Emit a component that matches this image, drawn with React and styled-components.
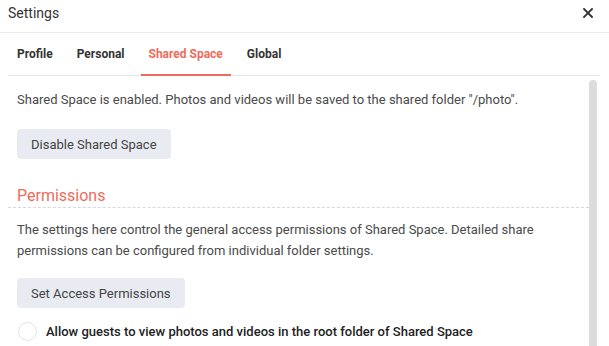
import styled, { createGlobalStyle } from "styled-components"

const GlobalStyle = createGlobalStyle`
    html, body {
        margin: 0;
        padding: 0;
        background: #fff;
        overflow: hidden;
    }
    body {
        font-family: Roboto, "Liberation Sans", sans-serif;
        color: #4a4a4a;
    }
`

const coral = "#ee6b5c"

const tabs = ["Profile", "Personal", "Shared Space", "Global"]

const App = () => {
    return(<>
    <GlobalStyle/>
    <Dialog>
        <Header>
            <Title>Settings</Title>
            <CloseButton aria-label="Close">
                <svg width="10" height="10" viewBox="0 0 10 10">
                    <path d="M1 1L9 9M9 1L1 9" stroke="#333" strokeWidth="1.9" strokeLinecap="square"/>
                </svg>
            </CloseButton>
        </Header>
        <Tabs>
            {tabs.map(t => <Tab key={t} active={t === "Shared Space"}>{t}</Tab>)}
        </Tabs>
        <Body>
            <Content>
                <Text>Shared Space is enabled. Photos and videos will be saved to the shared folder "/photo".</Text>
                <Button>Disable Shared Space</Button>
                <SectionTitle>Permissions</SectionTitle>
                <Paragraph>
                    The settings here control the general access permissions of Shared Space. Detailed share permissions can be configured from individual folder settings.
                </Paragraph>
                <Button top="17px">Set Access Permissions</Button>
                <OptionRow>
                    <Radio/>
                    <OptionLabel>Allow guests to view photos and videos in the root folder of Shared Space</OptionLabel>
                </OptionRow>
            </Content>
            <ScrollTrack>
                <ScrollThumb/>
            </ScrollTrack>
        </Body>
    </Dialog>
    </>)
}

const Dialog = styled.div`
    width: 609px;
    height: 346px;
    display: flex;
    flex-direction: column;
    overflow: hidden;
`

const Header = styled.div`
    height: 33px;
    flex-shrink: 0;
    display: flex;
    align-items: center;
    justify-content: space-between;
    padding: 0 16px 0 8px;
    border-bottom: 1px solid #e8eaec;
    box-sizing: border-box;
`

const Title = styled.div`
    font-size: 14px;
    color: #333;
    margin-top: -6px;
`

const CloseButton = styled.div`
    display: flex;
    align-items: center;
    margin-top: -6px;
`

const Tabs = styled.div`
    display: flex;
    gap: 8px;
    margin: 0 9px 0 8px;
    padding-left: 1px;
    height: 43px;
    flex-shrink: 0;
    border-bottom: 1px solid #e6e6e6;
    box-sizing: border-box;
`

const Tab = styled.div`
    display: flex;
    align-items: center;
    padding: 0 8px;
    font-size: 12px;
    font-weight: 700;
    color: ${p => p.active ? coral : "#333"};
    border-bottom: 2px solid ${p => p.active ? coral : "transparent"};
    margin-bottom: -1px;
    padding-top: 1px;
`

const Body = styled.div`
    flex: 1;
    display: flex;
    min-height: 0;
    margin: 0 12px 0 8px;
`

const Content = styled.div`
    flex: 1;
    padding: 14px 0 0 9px;
    font-size: 13px;
`

const Text = styled.div`
    line-height: 20px;
    color: #4a4a4a;
`

const Button = styled.div`
    display: inline-flex;
    align-items: center;
    height: 30px;
    padding: 0 14px;
    margin-top: ${p => p.top || "19px"};
    background: #e8ecf2;
    border-radius: 4px;
    color: #444;
    font-size: 13px;
`

const SectionTitle = styled.div`
    margin-top: 27px;
    font-size: 16px;
    line-height: 20px;
    color: ${coral};
    padding-bottom: 1px;
    margin-left: -9px;
    padding-left: 9px;
    border-bottom: 1px dashed #d6d9dd;
`

const Paragraph = styled.div`
    margin-top: 11px;
    line-height: 21px;
    color: #4a4a4a;
    padding-right: 40px;
`

const OptionRow = styled.div`
    display: flex;
    align-items: center;
    gap: 9px;
    margin-top: 14px;
    padding-left: 1px;
`

const Radio = styled.div`
    width: 17px;
    height: 17px;
    border: 1px solid #e2e4e7;
    border-radius: 50%;
    background: #fff;
    flex-shrink: 0;
`

const OptionLabel = styled.div`
    font-size: 13px;
    font-weight: 500;
    color: #222;
`

const ScrollTrack = styled.div`
    width: 8px;
    padding-top: 4px;
    display: flex;
`

const ScrollThumb = styled.div`
    flex: 1;
    background: #dcdcdc;
    border-radius: 4px 4px 0 0;
`

export default App
